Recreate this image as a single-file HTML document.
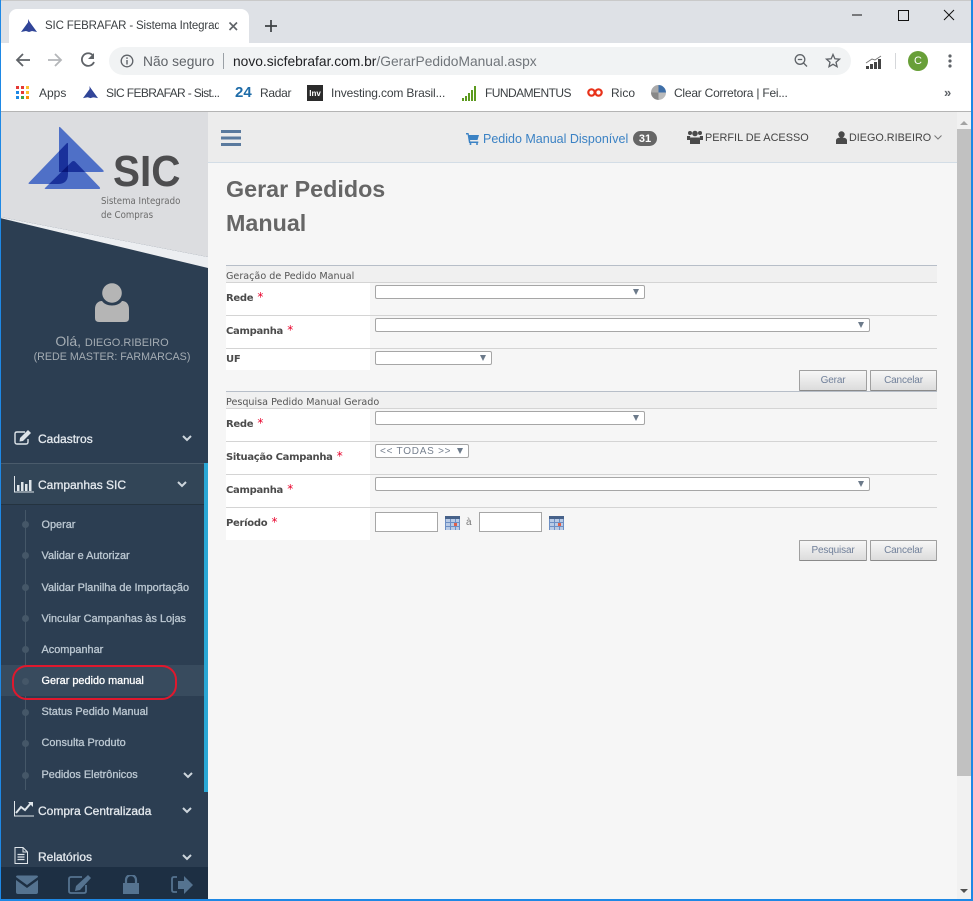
<!DOCTYPE html>
<html><head><meta charset="utf-8"><title>SIC FEBRAFAR</title>
<style>
html,body{margin:0;padding:0;width:973px;height:901px;overflow:hidden;background:#fff}
body{position:relative;font-family:"Liberation Sans",sans-serif}
div,span,svg{position:absolute}
.t{white-space:nowrap;line-height:14px}
.b{font-size:12px;color:#3c4043;top:86px}
.m{font-size:12px;color:#e4e9ee;left:38px;-webkit-text-stroke:.3px #e4e9ee}
.s{font-size:10.900px;color:#bcc8d2;left:41.500px;font-weight:400;-webkit-text-stroke:.3px #bcc8d2}
.dot{left:22px;width:7px;height:7px;border-radius:50%;background:#455768}
.l{font:bold 10px "DejaVu Sans",sans-serif;letter-spacing:-.3px;color:#4b4b4b;left:226px;white-space:nowrap;line-height:13px}
.l i{font-style:normal;color:#e8002a;font-weight:normal;font-size:12px;margin-left:1px;letter-spacing:0}
.w{background:#fff;left:226px;width:144px}
.hr{left:226px;width:711px;height:1px;background:#d4d4d4}
.sel{background:#fff;border:1px solid #a6a6a6;border-radius:2px;box-sizing:border-box;height:14px;left:375px}
.sel:after{content:"";position:absolute;right:5px;top:3px;border-left:3.500px solid transparent;border-right:3.500px solid transparent;border-top:6px solid #6c7a8a}
.sec{left:226px;width:711px;height:17px;background:#f0f0f0;border-top:1px solid #b7bec8;border-bottom:1px solid #d4d4d4;box-sizing:border-box;font:9.600px/22px "DejaVu Sans",sans-serif;color:#555;white-space:nowrap}
.btn{box-sizing:border-box;height:21px;border:1px solid #a0a0a0;border-bottom-color:#8a8a8a;border-radius:1px;background:linear-gradient(#f7f7f7,#dcdcdc);font:10px/19px "Liberation Sans",sans-serif;letter-spacing:-.15px;color:#71809a;text-align:center}
.inp{background:#fff;border:1px solid #a6a6a6;box-sizing:border-box;height:20px;width:63px;top:512px}
.cal{top:516px}
</style></head><body>

<!-- window chrome -->
<div style="left:0;top:0;width:973px;height:43px;background:#dee1e6"></div>
<div style="left:0;top:0;width:973px;height:1px;background:#c9c9c9"></div>
<div style="left:9px;top:9px;width:240px;height:34px;background:#fff;border-radius:8px 8px 0 0"></div>
<svg style="left:20px;top:18px" width="18" height="16" viewBox="0 0 18 16"><path d="M1 14L9 3l8 11-5-1-3 1-3-1z" fill="#2d4496"/><path d="M8 1l6 12H8z" fill="#34459a"/></svg>
<div class="t" style="left:45px;top:19px;width:174px;overflow:hidden;font-size:11.500px;letter-spacing:-.15px;color:#3c4043">SIC FEBRAFAR - Sistema Integrad</div>
<svg style="left:227px;top:20px" width="12" height="12" viewBox="0 0 12 12"><path d="M2.500 2.500l7.500 7.500M10 2.500L2.500 10" stroke="#5f6368" stroke-width="1.600"/></svg>
<svg style="left:263px;top:18px" width="16" height="16" viewBox="0 0 16 16"><path d="M8 2v12M2 8h12" stroke="#3c4043" stroke-width="1.700"/></svg>
<svg style="left:850px;top:8px" width="110" height="16" viewBox="0 0 110 16"><path d="M2 7h10" stroke="#111" stroke-width="1"/><path d="M48.500 2.500h10v10h-10z" fill="none" stroke="#111"/><path d="M94 2l10 10M104 2l-10 10" stroke="#111" stroke-width="1"/></svg>

<!-- toolbar -->
<svg style="left:14px;top:51px" width="90" height="19" viewBox="0 0 90 19"><path d="M16 9H3M9 3L3 9l6 6" fill="none" stroke="#5f6368" stroke-width="1.800"/><path d="M34 9h13M41 3l6 6-6 6" fill="none" stroke="#b4b6b9" stroke-width="1.800"/><path d="M79 4.500A6.300 6.300 0 1 0 80 11" fill="none" stroke="#5f6368" stroke-width="1.800"/><path d="M80 2v6h-6z" fill="#5f6368"/></svg>
<div style="left:109px;top:47px;width:742px;height:28px;border-radius:14px;background:#f1f3f4"></div>
<svg style="left:120px;top:54px" width="14" height="14" viewBox="0 0 14 14"><circle cx="7" cy="7" r="5.800" fill="none" stroke="#5f6368" stroke-width="1.300"/><path d="M7 6v4.500M7 3.400v1.500" stroke="#5f6368" stroke-width="1.400"/></svg>
<div class="t" style="left:143px;top:54.500px;font-size:13.800px;color:#5f6368">Não seguro</div>
<div style="left:223px;top:53px;width:1px;height:16px;background:#9aa0a6"></div>
<div class="t" style="left:233px;top:54.500px;font-size:13.800px;color:#202124">novo.sicfebrafar.com.br<span style="position:static;color:#70757a">/GerarPedidoManual.aspx</span></div>
<svg style="left:794px;top:53px" width="50" height="16" viewBox="0 0 50 16"><circle cx="6" cy="6.500" r="4.800" fill="none" stroke="#5f6368" stroke-width="1.300"/><path d="M3.800 6.500h4.400M9.500 10l3.500 3.500" stroke="#5f6368" stroke-width="1.300"/><path d="M39 1.500l1.900 4.300 4.600.4-3.500 3 1.100 4.500-4.100-2.400-4 2.400 1-4.500-3.500-3 4.700-.4z" fill="none" stroke="#5f6368" stroke-width="1.300"/></svg>
<svg style="left:865px;top:54px" width="18" height="16" viewBox="0 0 18 16"><path d="M1 9l6-4 3 1 6-4" fill="none" stroke="#777" stroke-width="1"/><path d="M1 12h3v3H1zM5 10h3v5H5zM9 8h3v7H9zM13 5h3v10h-3z" fill="#444"/></svg>
<div style="left:895px;top:53px;width:1px;height:16px;background:#d5d7da"></div>
<div style="left:908px;top:51px;width:20px;height:20px;border-radius:50%;background:#689f38;color:#fff;font-size:11px;line-height:20px;text-align:center">C</div>
<svg style="left:948px;top:53px" width="4" height="16" viewBox="0 0 4 16"><circle cx="2" cy="3" r="1.600" fill="#5f6368"/><circle cx="2" cy="8" r="1.600" fill="#5f6368"/><circle cx="2" cy="13" r="1.600" fill="#5f6368"/></svg>

<!-- bookmarks -->
<svg style="left:16px;top:86px" width="13" height="13" viewBox="0 0 13 13"><g><path fill="#e53935" d="M0 0h3v3H0z"/><path fill="#e53935" d="M5 0h3v3H5z"/><path fill="#fbc02d" d="M10 0h3v3h-3z"/><path fill="#1e88e5" d="M0 5h3v3H0z"/><path fill="#e53935" d="M5 5h3v3H5z"/><path fill="#fbc02d" d="M10 5h3v3h-3z"/><path fill="#1e88e5" d="M0 10h3v3H0z"/><path fill="#43a047" d="M5 10h3v3H5z"/><path fill="#fb8c00" d="M10 10h3v3h-3z"/></g></svg>
<div class="t b" style="left:39px">Apps</div>
<svg style="left:82px;top:85px" width="17" height="15" viewBox="0 0 18 16"><path d="M1 14L9 3l8 11-5-1-3 1-3-1z" fill="#2d4496"/><path d="M8 1l6 12H8z" fill="#34459a"/></svg>
<div class="t b" style="left:106px;letter-spacing:-.64px">SIC FEBRAFAR - Sist...</div>
<div class="t" style="left:235px;top:86px;font-size:15px;font-weight:bold;color:#1f6ca8">24</div>
<div class="t b" style="left:260px;letter-spacing:-.3px">Radar</div>
<div style="left:307px;top:85px;width:16px;height:16px;background:#2b2b2b;color:#fff;font:bold 8px/17px 'Liberation Sans',sans-serif;text-align:center">Inv</div>
<div class="t b" style="left:331px;letter-spacing:-.14px">Investing.com Brasil...</div>
<svg style="left:462px;top:85px" width="15" height="16" viewBox="0 0 15 16"><path d="M0 13h2v3H0zM3 11h2v5H3zM6 8h2v8H6zM9 5h2v11H9zM12 1h2v15h-2z" fill="#5c9a1e"/></svg>
<div class="t b" style="left:485px;letter-spacing:-.55px">FUNDAMENTUS</div>
<svg style="left:587px;top:87px" width="16" height="11" viewBox="0 0 16 11"><circle cx="4.500" cy="5.500" r="3.200" fill="none" stroke="#e8321a" stroke-width="2.200"/><circle cx="11.500" cy="5.500" r="3.200" fill="none" stroke="#e8321a" stroke-width="2.200"/></svg>
<div class="t b" style="left:611px">Rico</div>
<div style="left:651px;top:85px;width:15px;height:15px;border-radius:50%;background:conic-gradient(#3f6fa8 0 25%,#bbb 25% 50%,#888 50% 75%,#aaa 75%)"></div>
<div class="t b" style="left:674px;letter-spacing:-.23px">Clear Corretora | Fei...</div>
<div class="t" style="left:944px;top:86px;font-size:13px;font-weight:bold;color:#5f6368">»</div>
<div style="left:0;top:111px;width:973px;height:1px;background:#b4b4b4"></div>

<!-- content -->
<div style="left:208px;top:112px;width:749px;height:789px;background:#f6f6f6"></div>
<div style="left:208px;top:112px;width:749px;height:50px;background:#ececec;border-bottom:1px solid #d3dde6"></div>

<!-- top nav -->
<svg style="left:221px;top:129px" width="20" height="18" viewBox="0 0 20 18"><path d="M0 1h20v3H0zM0 7.500h20v3H0zM0 14h20v3H0z" fill="#5a7a9e"/></svg>
<svg style="left:466px;top:133px" width="13" height="12" viewBox="0 0 13 12"><path d="M0 0h2.500l.5 2h10l-1.500 5H4l.3 1.500h8V10H3L1.600 1.500H0z" fill="#3b82c4"/><circle cx="4.500" cy="11" r="1" fill="#3b82c4"/><circle cx="11" cy="11" r="1" fill="#3b82c4"/></svg>
<div class="t" style="left:483px;top:132px;font-size:12.500px;color:#3b82c4">Pedido Manual Disponível</div>
<div style="left:633px;top:131px;width:24px;height:15px;border-radius:8px;background:#666;color:#fff;font:bold 11px/16px 'Liberation Sans',sans-serif;text-align:center">31</div>
<svg style="left:687px;top:130px" width="16" height="14" viewBox="0 0 16 14"><circle cx="3" cy="3" r="2" fill="#4a4a4a"/><circle cx="13" cy="3" r="2" fill="#4a4a4a"/><circle cx="8" cy="3.500" r="2.800" fill="#4a4a4a"/><path d="M0 6h3l1 3v1H0zM16 6h-3l-1 3v1h4z" fill="#4a4a4a"/><path d="M4 7.500h8l1 2V14H3V9.500z" fill="#4a4a4a"/></svg>
<div class="t" style="left:705px;top:131px;font-size:10.900px;color:#444">PERFIL DE ACESSO</div>
<svg style="left:836px;top:131px" width="11" height="13" viewBox="0 0 11 13"><circle cx="5.500" cy="3.500" r="3.200" fill="#4a4a4a"/><path d="M0 13V9.500C0 7.500 2 6.500 5.500 6.500S11 7.500 11 9.500V13z" fill="#4a4a4a"/></svg>
<div class="t" style="left:849px;top:131px;font-size:10.800px;color:#444">DIEGO.RIBEIRO</div>
<svg style="left:934px;top:135px" width="8" height="5" viewBox="0 0 8 5"><path d="M.5.500L4 4 7.500.500" fill="none" stroke="#777"/></svg>

<!-- title -->
<div style="left:226px;top:172px;font-size:23.300px;font-weight:bold;color:#666;line-height:34px;white-space:nowrap">Gerar Pedidos<br>Manual</div>

<!-- form 1 -->
<div class="sec" style="top:265px;height:18px">Geração de Pedido Manual</div>
<div class="w" style="top:283px;height:87px"></div>
<div class="hr" style="top:315px"></div><div class="hr" style="top:348px"></div>
<div class="l" style="top:291px">Rede <i>*</i></div>
<div class="l" style="top:324px">Campanha <i>*</i></div>
<div class="l" style="top:353px">UF</div>
<div class="sel" style="top:285px;width:270px"></div>
<div class="sel" style="top:318px;width:495px"></div>
<div class="sel" style="top:351px;width:117px"></div>
<div class="btn" style="left:799px;top:370px;width:68px">Gerar</div>
<div class="btn" style="left:870px;top:370px;width:67px">Cancelar</div>

<!-- form 2 -->
<div class="sec" style="top:391px;height:18px">Pesquisa Pedido Manual Gerado</div>
<div class="w" style="top:409px;height:131px"></div>
<div class="hr" style="top:441px"></div><div class="hr" style="top:474px"></div><div class="hr" style="top:507px"></div>
<div class="l" style="top:417px">Rede <i>*</i></div>
<div class="l" style="top:450px">Situação Campanha <i>*</i></div>
<div class="l" style="top:483px">Campanha <i>*</i></div>
<div class="l" style="top:516px">Período <i>*</i></div>
<div class="sel" style="top:411px;width:270px"></div>
<div class="sel" style="top:444px;width:94px;font:10px/14px 'Liberation Sans',sans-serif;color:#77818f;padding-left:4px;letter-spacing:.75px">&lt;&lt; TODAS &gt;&gt;</div>
<div class="sel" style="top:477px;width:495px"></div>
<div class="inp" style="left:375px"></div>
<svg class="cal" style="left:445px" width="15" height="14" viewBox="0 0 15 14"><rect width="15" height="14" fill="#b9cbe6"/><rect width="15" height="3" fill="#47628a"/><path d="M.5 3v11M5.500 3v11M10.500 3v11M14.500 3v11M0 6.500h15M0 10.500h15" stroke="#6d8fc4" stroke-width="1"/><rect x="9" y="7" width="3" height="3" fill="#e0604a"/></svg>
<div class="t" style="left:466px;top:516px;font-size:10px;color:#777">à</div>
<div class="inp" style="left:479px"></div>
<svg class="cal" style="left:549px" width="15" height="14" viewBox="0 0 15 14"><rect width="15" height="14" fill="#b9cbe6"/><rect width="15" height="3" fill="#47628a"/><path d="M.5 3v11M5.500 3v11M10.500 3v11M14.500 3v11M0 6.500h15M0 10.500h15" stroke="#6d8fc4" stroke-width="1"/><rect x="9" y="7" width="3" height="3" fill="#e0604a"/></svg>
<div class="btn" style="left:799px;top:540px;width:68px">Pesquisar</div>
<div class="btn" style="left:870px;top:540px;width:67px">Cancelar</div>

<!-- sidebar -->
<div style="left:0;top:112px;width:208px;height:789px;background:#2c3e52"></div>
<svg style="left:0;top:112px" width="208" height="160" viewBox="0 0 208 160"><path d="M0 0h208v145L0 105z" fill="#dcdde0"/><path d="M0 105l208 40v11L0 106z" fill="#eceef1"/></svg>
<svg style="left:20px;top:120px;isolation:isolate" width="90" height="75" viewBox="0 0 90 75"><path d="M39 8q0-2 1.500-.5L83 50q2 2-1 2H39z" fill="#4f70c7" style="mix-blend-mode:multiply"/><path d="M48 24q0-2-1.500-.5L9 62.500Q7.500 64 10 64h28q10 0 10-10z" fill="#4f70c7" style="mix-blend-mode:multiply"/><path d="M52 41.500q1.500-1 3 0L79.500 67q1.500 2-1 2H26q-2 0-1-1z" fill="#4f70c7" style="mix-blend-mode:multiply"/></svg>
<div class="t" style="left:113px;top:150px;font-size:44px;line-height:44px;font-weight:bold;color:#4d4d4f;transform:scaleX(.92);transform-origin:left top">SIC</div>
<div style="left:101px;top:195px;font:10px/14px 'DejaVu Sans Condensed','DejaVu Sans',sans-serif;color:#6b6b6b;white-space:nowrap;transform:scaleX(.96);transform-origin:left top">Sistema Integrado<br>de Compras</div>

<svg style="left:95px;top:283px" width="34" height="40" viewBox="0 0 34 40"><circle cx="17" cy="10" r="9.800" fill="#b5b5b5"/><path d="M0 35V26c0-5 3-8 7-8 2 3 6 4.500 10 4.500s8-1.500 10-4.500c4 0 7 3 7 8v9q0 4-4 4H4q-4 0-4-4z" fill="#b5b5b5"/></svg>
<div class="t" style="left:0;width:224px;top:334px;text-align:center;font-size:14px;color:#a4acb3">Olá, <span style="position:static;font-size:11px">DIEGO.RIBEIRO</span></div>
<div class="t" style="left:0;width:224px;top:350px;text-align:center;font-size:10.700px;color:#a4acb3">(REDE MASTER: FARMARCAS)</div>

<div class="t m" style="top:432px">Cadastros</div>
<svg style="left:14px;top:430px" width="18" height="15" viewBox="0 0 18 15"><path d="M14 9v3q0 2-2 2H3q-2 0-2-2V4q0-2 2-2h8" fill="none" stroke="#dfe5ea" stroke-width="1.400"/><path d="M6 8l8-8 3 3-8 8-3.500.5z" fill="#dfe5ea"/></svg>
<svg style="left:182px;top:435px" width="10" height="7" viewBox="0 0 10 7"><path d="M1 1l4 4 4-4" fill="none" stroke="#cdd5dc" stroke-width="2"/></svg>

<div style="left:1px;top:463px;width:203px;height:42px;background:#324557;border-top:1px solid #4a5b6b;border-bottom:1px solid #24333f;box-sizing:border-box"></div>
<div style="left:204px;top:463px;width:4px;height:329px;background:#2aa7d5"></div>
<svg style="left:14px;top:476px" width="20" height="17" viewBox="0 0 20 17"><path d="M.5 0v16H20" fill="none" stroke="#dfe5ea"/><path d="M3 9h2.500v6H3zM7 6h2.500v9H7zM11 8h2.500v7H11zM15 4h2.500v11H15z" fill="#dfe5ea"/></svg>
<div class="t m" style="top:478px">Campanhas SIC</div>
<svg style="left:177px;top:481px" width="10" height="7" viewBox="0 0 10 7"><path d="M1 1l4 4 4-4" fill="none" stroke="#cdd5dc" stroke-width="2"/></svg>

<div style="left:25px;top:510px;width:1px;height:280px;background:#455768"></div>
<div style="left:1px;top:665px;width:203px;height:31px;background:#384b5e"></div>
<div class="dot" style="top:521px"></div><div class="t s" style="top:518px">Operar</div>
<div class="dot" style="top:552px"></div><div class="t s" style="top:549px">Validar e Autorizar</div>
<div class="dot" style="top:584px"></div><div class="t s" style="top:581px">Validar Planilha de Importação</div>
<div class="dot" style="top:615px"></div><div class="t s" style="top:612px">Vincular Campanhas às Lojas</div>
<div class="dot" style="top:646px"></div><div class="t s" style="top:643px">Acompanhar</div>
<div class="dot" style="top:678px"></div><div class="t s" style="top:674px;color:#fff;-webkit-text-stroke:.3px #fff">Gerar pedido manual</div>
<div class="dot" style="top:709px"></div><div class="t s" style="top:705px">Status Pedido Manual</div>
<div class="dot" style="top:740px"></div><div class="t s" style="top:736px">Consulta Produto</div>
<div class="dot" style="top:772px"></div><div class="t s" style="top:768px">Pedidos Eletrônicos</div>
<svg style="left:183px;top:772px" width="10" height="7" viewBox="0 0 10 7"><path d="M1 1l4 4 4-4" fill="none" stroke="#cdd5dc" stroke-width="2"/></svg>
<div style="left:12px;top:665px;width:165px;height:35px;box-sizing:border-box;border:2px solid #e0182d;border-radius:15px"></div>

<svg style="left:14px;top:801px" width="20" height="16" viewBox="0 0 20 16"><path d="M.5 0v15H20" fill="none" stroke="#dfe5ea"/><path d="M2 12l5-6 4 3 6-7" fill="none" stroke="#dfe5ea" stroke-width="2"/><path d="M14 1h5v5z" fill="#dfe5ea"/></svg>
<div class="t m" style="top:804px">Compra Centralizada</div>
<svg style="left:182px;top:807px" width="10" height="7" viewBox="0 0 10 7"><path d="M1 1l4 4 4-4" fill="none" stroke="#cdd5dc" stroke-width="2"/></svg>
<svg style="left:14px;top:847px" width="14" height="17" viewBox="0 0 14 17"><path d="M1 .5h8l4.500 4.500V16.500H1z" fill="#2c3e52" stroke="#dfe5ea"/><path d="M3.500 7.500h7M3.500 10h7M3.500 12.500h7" stroke="#dfe5ea" stroke-width="1.200"/><path d="M9 1v4h4" fill="none" stroke="#dfe5ea"/></svg>
<div class="t m" style="top:850px">Relatórios</div>
<svg style="left:182px;top:854px" width="10" height="7" viewBox="0 0 10 7"><path d="M1 1l4 4 4-4" fill="none" stroke="#cdd5dc" stroke-width="2"/></svg>

<!-- sidebar footer -->
<div style="left:0;top:867px;width:208px;height:34px;background:#1d2f43"></div>
<svg style="left:16px;top:875px" width="178" height="20" viewBox="0 0 178 20"><path d="M0 2q0-1.500 1.500-1.500h19Q22 .5 22 2L11 10z" fill="#557390"/><path d="M0 5l11 8 11-8v12q0 2-2 2H2q-2 0-2-2z" fill="#557390"/><path d="M70 10v6q0 2-2 2H55q-2 0-2-2V4q0-2 2-2h11" fill="none" stroke="#557390" stroke-width="1.800"/><path d="M60 11l12-11 3 3-11 12-5 1z" fill="#557390"/><path d="M110 8V5a5 5 0 0 1 10 0v3" fill="none" stroke="#557390" stroke-width="2.200"/><path d="M107 8h16v11h-16z" fill="#557390"/><path d="M161 2h-3q-2 0-2 2v11q0 2 2 2h3" fill="none" stroke="#557390" stroke-width="1.800"/><path d="M162 6h6V1l9 9-9 9v-5h-6z" fill="#557390"/></svg>

<!-- scrollbar -->
<div style="left:957px;top:112px;width:14px;height:789px;background:#f1f1f1"></div>
<div style="left:957px;top:129px;width:14px;height:647px;background:#c1c1c1"></div>
<div style="left:960px;top:121px;border-left:4px solid transparent;border-right:4px solid transparent;border-bottom:4px solid #a3a3a3"></div>
<div style="left:960px;top:889px;border-left:4px solid transparent;border-right:4px solid transparent;border-top:4px solid #505050"></div>

<!-- window border -->
<div style="left:0;top:0;width:1px;height:901px;background:#1e88e5"></div>
<div style="left:971px;top:0;width:2px;height:901px;background:#1e88e5"></div>
<div style="left:0;top:899px;width:973px;height:2px;background:#1e88e5"></div>
</body></html>
